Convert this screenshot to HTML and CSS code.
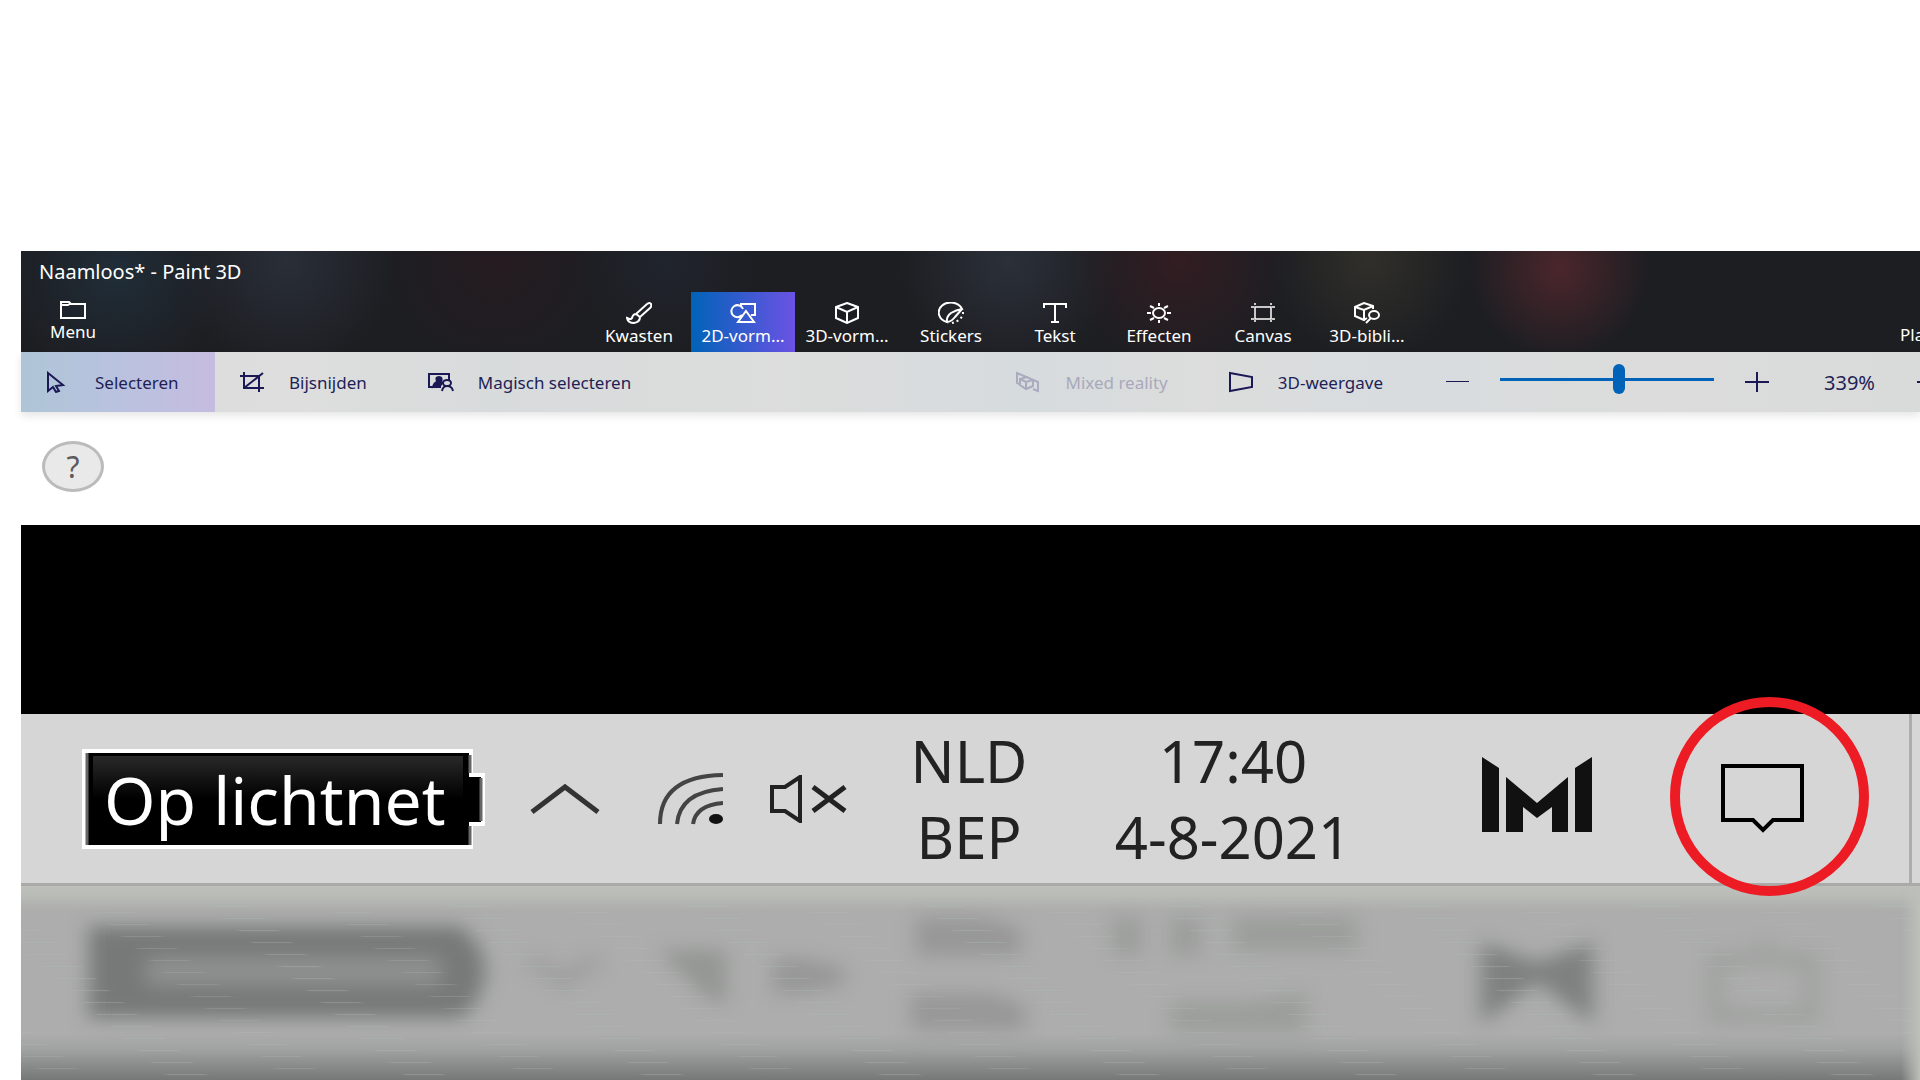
FILE: index.html
```html
<!DOCTYPE html>
<html lang="nl">
<head>
<meta charset="utf-8">
<title>Naamloos* - Paint 3D</title>
<link rel="stylesheet" href="styles.css">
</head>
<body>
<main class="app">
  <header class="header">
    <h1 class="title">Naamloos* - Paint 3D</h1>
    <nav class="tabs">
      <button class="tab menu"><svg width="26" height="20" viewBox="0 0 26 20"><path d="M1 3V18H25V4H11L9 2H1ZM1 5H8L11 3"/></svg>Menu</button>
      <button class="tab first"><svg width="26" height="22" viewBox="0 0 26 22"><path d="M10 12L21 2Q24 0 25 2Q26 4 24 6L14 15ZM10 12Q7 12 6 16Q5 18 1 16Q2 21 8 21Q14 20 14 15"/></svg>Kwasten</button>
      <button class="tab active"><svg width="26" height="22" viewBox="0 0 26 22"><path d="M11 5V2H25V13H21M16 9L24 20H8ZM12 13A6 6 0 1 1 13 7"/></svg>2D-vorm...</button>
      <button class="tab"><svg width="26" height="22" viewBox="0 0 26 22"><path d="M13 1L24 5V16L13 21L2 16V5ZM2 5L13 10L24 5M13 10V21"/></svg>3D-vorm...</button>
      <button class="tab"><svg width="26" height="22" viewBox="0 0 26 22"><path d="M24 7A12 10 0 1 0 9 20Q8 15 13 11Q18 8 24 7ZM9 20Q13 20 17 15L24 7"/><path d="M25 10Q25 18 14 21" stroke-dasharray="2 3"/></svg>Stickers</button>
      <button class="tab"><svg width="26" height="22" viewBox="0 0 26 22"><path d="M2 6V2H24V6M13 2V20M9 20H17"/></svg>Tekst</button>
      <button class="tab"><svg width="26" height="22" viewBox="0 0 26 22"><ellipse cx="13" cy="11" rx="6" ry="5"/><path d="M13 1V4M13 18V21M1 11H5M21 11H25M4 4L8 6M22 4L18 6M4 18L8 16M22 18L18 16"/></svg>Effecten</button>
      <button class="tab"><svg width="26" height="22" viewBox="0 0 26 22"><path d="M5 5H21V17H5ZM1 5H4M22 5H25M1 17H4M22 17H25M5 1V3M21 1V3M5 18V20M21 18V20" stroke-width="1.500"/></svg>Canvas</button>
      <button class="tab"><svg width="26" height="22" viewBox="0 0 26 22"><path d="M19 7V4L10 1L1 5V14L10 18L13 16M1 5L10 8L19 4M10 8V18M12 21L17 16"/><ellipse cx="20" cy="13" rx="5" ry="4"/></svg>3D-bibli...</button>
      <button class="tab paste">Pla</button>
    </nav>
  </header>

  <div class="ribbon">
    <button class="tool selected"><svg width="26" height="22" viewBox="0 0 26 22"><path d="M3 2V20L8 16L11 21L14 20L11 15L18 14Z"/></svg>Selecteren</button>
    <button class="tool"><svg width="26" height="22" viewBox="0 0 26 22"><path d="M5 1V17H25M1 5H20V21M5 17L24 2"/></svg>Bijsnijden</button>
    <button class="tool magic"><svg width="26" height="22" viewBox="0 0 26 22"><path d="M13 16H1V3H21V9"/><path class="solid" d="M5 16Q6 12 9 11V10Q7 6 11 6Q15 6 13 11L14 12L12 15Z"/><ellipse cx="19" cy="12" rx="4" ry="3"/><path d="M14 20Q15 15 19 15Q24 15 25 20"/></svg>Magisch selecteren</button>
    <button class="tool mixed" disabled><svg width="26" height="22" viewBox="0 0 26 22"><path d="M4 13L2 12V2L23 11V20L18 18M5 14V8L12 6L18 9V15L11 18ZM5 8L11 11L18 9M11 11V18"/></svg>Mixed reality</button>
    <button class="tool"><svg width="26" height="22" viewBox="0 0 26 22"><path d="M2 2L24 6V16L2 20Z"/></svg>3D-weergave</button>
    <div class="zoom">
      <button class="step" aria-label="Uitzoomen"><svg width="26" height="22" viewBox="0 0 26 22"><path d="M1 10H24V11H1Z" fill="#1b1955" stroke="none"/></svg></button>
      <input class="slider" type="range" min="0" max="100" value="56" aria-label="Zoom">
      <button class="step" aria-label="Inzoomen"><svg width="26" height="22" viewBox="0 0 26 22"><path d="M1 11H25M13 1V21"/></svg></button>
      <output class="percent">339%</output>
      <button class="more" aria-label="Meer"><svg width="26" height="22" viewBox="0 0 26 22"><path d="M0 11H25"/></svg></button>
    </div>
  </div>

  <section class="workspace">
    <button class="help">?</button>
  </section>
  <section class="canvas"></section>

  <footer class="taskbar">
    <div class="battery">
      <svg class="battery-shape" viewBox="0 0 403 100" preserveAspectRatio="none" aria-hidden="true">
        <defs><linearGradient id="shine" x2="0" y2="1"><stop offset="0" stop-color="#292929"/><stop offset="1" stop-color="#000"/></linearGradient></defs>
        <path d="M2 2H389V26H401V75H389V98H2Z" fill="#000" stroke="#fff" stroke-width="4"/>
        <path d="M11 7H381V50H11Z" fill="url(#shine)"/>
        <path d="M5 4V96M388 6V24M388 77V96M399 29V72" stroke="#666" stroke-width="3"/>
      </svg>
      <span class="battery-text">Op lichtnet</span>
    </div>
    <button class="tray chevron" aria-label="Verborgen pictogrammen"><svg width="72" height="32" viewBox="0 0 72 32"><path d="M3 29L36 4L69 29" stroke="#333" stroke-width="5"/></svg></button>
    <button class="tray wifi" aria-label="Netwerk"><svg width="66" height="52" viewBox="0 0 66 52"><path d="M3 51Q3 3 66 2M20 51Q23 19 66 16M36 51Q39 32 66 30" stroke="#444" stroke-width="4"/><ellipse cx="59" cy="46" rx="7" ry="5" fill="#111"/></svg></button>
    <button class="tray volume" aria-label="Geluid gedempt"><svg width="78" height="48" viewBox="0 0 78 48"><path d="M3 12H16L31 2V46L16 36H3Z" stroke="#222" stroke-width="4"/><path d="M44 12L76 36M76 12L44 36" stroke="#222" stroke-width="5"/></svg></button>
    <button class="tray language"><span>NLD</span><span>BEP</span></button>
    <button class="tray clock"><span>17:40</span><span>4-8-2021</span></button>
    <button class="tray logo" aria-label="M"><svg width="112" height="78" viewBox="0 0 112 78"><path d="M1 1L18 12V76H1ZM25 21L56 47L87 21V76H71V51L56 62L42 51V76H25ZM94 12L111 1V76H94Z" fill="#111"/></svg></button>
    <button class="tray notify" aria-label="Meldingen"><svg width="84" height="70" viewBox="0 0 84 70"><path d="M3 2H82V56H53L43 66L33 56H3Z" stroke="#000" stroke-width="4"/></svg></button>
    <button class="desktop" aria-label="Bureaublad weergeven"></button>
  </footer>

  <svg class="reflection" viewBox="0 0 1899 194" preserveAspectRatio="none" aria-hidden="true">
    <defs>
      <linearGradient id="metal" x2="0" y2="1"><stop offset="0" stop-color="#bdbfba"/><stop offset=".04" stop-color="#bbbdb8"/><stop offset=".13" stop-color="#acadac"/><stop offset=".76" stop-color="#acadac"/><stop offset=".84" stop-color="#a1a3a2"/><stop offset="1" stop-color="#767877"/></linearGradient>
      <linearGradient id="edge"><stop offset="0" stop-color="#bdbfb9" stop-opacity="0"/><stop offset="1" stop-color="#bdbfb9"/></linearGradient>
      <filter id="soft" x="-20%" y="-40%" width="140%" height="180%" color-interpolation-filters="sRGB"><feGaussianBlur stdDeviation="10 9"/></filter>
      <pattern id="streaks" width="238" height="12" patternUnits="userSpaceOnUse" patternTransform="skewX(49)"><path d="M40 2H80L88 3H48ZM162 8H202L210 9H170Z" fill="#bbc1be" opacity=".3"/></pattern>
    </defs>
    <rect width="1899" height="194" fill="url(#metal)"/>
    <g filter="url(#soft)" fill="#777978">
      <path d="M68 40H440Q464 62 464 82Q464 112 440 132H68Z"/>
      <path d="M125 70H420V100H125Z" fill="#8e908f"/>
      <path d="M510 65L543 84L576 65L580 80L543 106L506 80Z" opacity=".25"/>
      <path d="M637 64H705V116H690Z" opacity=".45"/>
      <path d="M752 72H785L824 82V98L785 108H752Z" opacity=".4"/>
      <path d="M895 31H960L1000 42V70H895ZM890 107H970L1005 120V144H890Z" opacity=".4"/>
      <path d="M1092 31H1120V70H1092ZM1150 31H1180V70H1150ZM1212 31H1335V65H1212ZM1150 116H1230L1285 106V146H1150Z" opacity=".3"/>
      <path d="M1460 56L1516 76L1572 56V138L1516 96L1460 138Z" opacity=".85"/>
      <path d="M1695 74H1730L1743 64L1756 74H1790V130H1695Z" fill="none" stroke="#777978" stroke-width="16" opacity=".22"/>
    </g>
    <rect y="16" width="1899" height="178" fill="url(#streaks)"/>
    <rect x="1880" width="19" height="194" fill="url(#edge)"/>
  </svg>
</main>
</body>
</html>
```
FILE: styles.css
```css
*, ::after { box-sizing: border-box; }
body {
  margin: 0;
  background: #fff;
  font-family: "Noto Sans", "Open Sans", sans-serif;
  font-size: 17px;
}
button {
  margin: 0;
  padding: 0;
  border: 0;
  background: none;
  color: inherit;
  font: inherit;
}
svg {
  display: block;
  flex: none;
  fill: none;
}
.app {
  display: flex;
  flex-direction: column;
  min-height: 100vh;
  padding: 251px 0 0 21px;
  overflow: hidden;
}
.header {
  display: flex;
  flex-direction: column;
  justify-content: space-between;
  height: 101px;
  color: #fff;
  background:
    radial-gradient(circle at 81% 18%, #4b262c, transparent 90px),
    radial-gradient(circle at 61% 10%, #321d22, transparent 110px),
    radial-gradient(circle at 71% 10%, #302f2a, transparent 100px),
    radial-gradient(circle at 52% 10%, #2b3039, transparent 110px),
    radial-gradient(circle at 34% 10%, #20242d, transparent 90px),
    radial-gradient(circle at 25% 10%, #251b20, transparent 110px),
    radial-gradient(circle at 14% 10%, #292e38, transparent 110px),
    radial-gradient(circle at 5% 20%, #202d38, transparent 110px),
    #1d1e22;
}
.title {
  margin: 0;
  padding: 7px 18px 0;
  font-size: 20px;
  font-weight: 400;
  line-height: 28px;
}
.tabs { display: flex; }
.tab {
  display: flex;
  flex: none;
  flex-direction: column;
  align-items: center;
  width: 104px;
  height: 60px;
  padding-top: 10px;
  line-height: 24px;
  white-space: nowrap;
}
.tab svg {
  stroke: #fff;
  stroke-width: 2;
}
.menu { padding-top: 8px; }
.first { margin-left: 462px; }
.active { background: linear-gradient(90deg, #0063b8, #6b52e5); }
.paste {
  align-items: flex-start;
  justify-content: flex-end;
  width: 20px;
  margin-left: auto;
  padding-bottom: 5px;
}
.ribbon {
  display: flex;
  flex: none;
  height: 60px;
  color: #221f56;
  background: linear-gradient(90deg, #d9dbda, #dddedd 15%, #d8dbdc 25%, #dcdddc 40%, #d6dbde 53%, #dcdddc 62%, #d8dcdf 72%, #dbdcdb 85%, #d9dbda);
  box-shadow: 0 4px 8px #0000001a;
}
.tool {
  display: flex;
  flex: none;
  align-items: center;
  gap: 24px;
  padding: 0 24px;
  white-space: nowrap;
}
.tool svg, .step svg, .more svg {
  stroke: #1b1955;
  stroke-width: 2;
}
.tool .solid { fill: #1b1955; }
.selected {
  width: 194px;
  background: linear-gradient(90deg, #aec5d6, #b7c3de 40%, #c5bce0);
}
.magic { margin-left: 13px; }
.mixed {
  margin-right: 12px;
  margin-left: auto;
  color: #a9a9bb;
}
.mixed svg { stroke: #aaabbf; }
.zoom {
  display: flex;
  flex: none;
  align-items: center;
  width: 475px;
  margin-left: 38px;
  overflow: hidden;
}
.slider {
  appearance: none;
  flex: none;
  width: 214px;
  height: 30px;
  margin: 0 30px 6px 29px;
  background: linear-gradient(#0063b8, #0063b8) center / 100% 3px no-repeat;
}
.slider::-webkit-slider-thumb {
  appearance: none;
  width: 12px;
  height: 30px;
  border-radius: 6px;
  background: #0063b8;
}
.percent {
  margin: 0 42px 0 54px;
  font-size: 20px;
}
.workspace {
  flex: none;
  height: 113px;
  padding: 29px 21px;
}
.help {
  width: 62px;
  height: 51px;
  border: 3px solid #bbb;
  border-radius: 50%;
  background: #e9e9e9;
  color: #5e595c;
  font-size: 30px;
  line-height: 40px;
}
.canvas {
  flex: none;
  height: 189px;
  background: #000;
}
.taskbar {
  display: flex;
  flex: none;
  align-items: center;
  height: 172px;
  padding-left: 61px;
  border-bottom: 3px solid #aaaba8;
  background: #d6d6d6;
}
.battery {
  display: grid;
  flex: none;
  width: 403px;
  height: 100px;
}
.battery > * { grid-area: 1 / 1; }
.battery-shape {
  width: 100%;
  height: 100%;
}
.battery-text {
  padding-left: 22px;
  color: #fff;
  font-size: 66px;
  line-height: 100px;
  white-space: nowrap;
  z-index: 1;
}
.tray { flex: none; }
.chevron { margin-left: 44px; }
.wifi { margin-left: 56px; }
.volume { margin-left: 46px; }
.language, .clock {
  display: grid;
  color: #222;
  font-size: 58px;
  line-height: 76px;
}
.language {
  width: 178px;
  margin-left: 33px;
}
.clock {
  width: 290px;
  margin-left: 30px;
}
.logo {
  margin-left: 103px;
  padding-bottom: 8px;
}
.notify {
  position: relative;
  margin-left: 127px;
}
.notify::after {
  position: absolute;
  top: -67px;
  left: -50px;
  width: 199px;
  height: 199px;
  border: 10px solid #ed1c24;
  border-radius: 50%;
  content: "";
  z-index: 2;
}
.desktop {
  align-self: stretch;
  width: 11px;
  margin-left: auto;
  border-left: 3px solid #acacac;
}
.reflection {
  flex: 1 0 194px;
  width: 100%;
}
```
